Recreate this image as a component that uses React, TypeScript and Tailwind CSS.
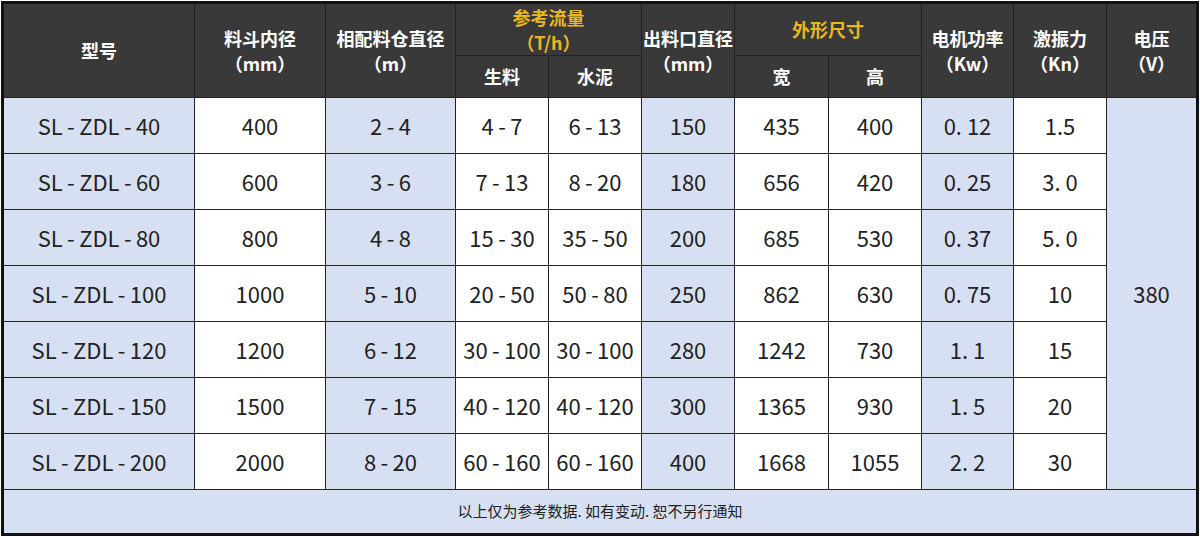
const rows = [
  ['SL-ZDL-40', '400', '2-4', '4-7', '6-13', '150', '435', '400', '0. 12', '1.5'],
  ['SL-ZDL-60', '600', '3-6', '7-13', '8-20', '180', '656', '420', '0. 25', '3. 0'],
  ['SL-ZDL-80', '800', '4-8', '15-30', '35-50', '200', '685', '530', '0. 37', '5. 0'],
  ['SL-ZDL-100', '1000', '5-10', '20-50', '50-80', '250', '862', '630', '0. 75', '10'],
  ['SL-ZDL-120', '1200', '6-12', '30-100', '30-100', '280', '1242', '730', '1. 1', '15'],
  ['SL-ZDL-150', '1500', '7-15', '40-120', '40-120', '300', '1365', '930', '1. 5', '20'],
  ['SL-ZDL-200', '2000', '8-20', '60-160', '60-160', '400', '1668', '1055', '2. 2', '30'],
];

// columns painted light blue in the body
const blueCols = [0, 2, 5, 8];

const widths = [192, 131, 130, 93, 93, 93, 94, 93, 92, 93, 91];

function fmt(v: string) {
  // the source font draws hyphens with space around them
  return v.replace(/-/g, '\u2009-\u2009');
}

export default function App() {
  const th = 'border border-[#222] bg-[#393939] text-white font-bold text-[18px] leading-[25px] text-center align-middle';
  return (
    <div className="w-[1200px] h-[538px] bg-white overflow-hidden" style={{ fontFamily: '"Noto Sans CJK SC", "Noto Sans", sans-serif' }}>
      <table className="table-fixed border-collapse w-[1198px] ml-px mt-px border-[3px] border-[#111]">
        <colgroup>
          {widths.map((w, i) => (
            <col key={i} style={{ width: w }} />
          ))}
        </colgroup>
        <thead>
          <tr className="h-[53px]">
            <th rowSpan={2} className={th}>型号</th>
            <th rowSpan={2} className={th}>料斗内径<br />（mm）</th>
            <th rowSpan={2} className={th}>相配料仓直径<br />（m）</th>
            <th colSpan={2} className={`${th} !text-[#eab81e]`}>参考流量<br />（T/h）</th>
            <th rowSpan={2} className={th}>出料口直径<br />（mm）</th>
            <th colSpan={2} className={`${th} !text-[#eab81e]`}>外形尺寸</th>
            <th rowSpan={2} className={th}>电机功率<br />（Kw）</th>
            <th rowSpan={2} className={th}>激振力<br />（Kn）</th>
            <th rowSpan={2} className={th}>电压<br />（V）</th>
          </tr>
          <tr className="h-[42px]">
            <th className={th}>生料</th>
            <th className={th}>水泥</th>
            <th className={th}>宽</th>
            <th className={th}>高</th>
          </tr>
        </thead>
        <tbody>
          {rows.map((r, ri) => (
            <tr key={ri} className="h-[56px]">
              {r.map((v, ci) => (
                <td
                  key={ci}
                  className={`border border-[#222] text-center align-middle text-[22px] text-[#222] ${blueCols.includes(ci) ? 'bg-[#d7e0f2]' : 'bg-white'}`}
                >
                  {fmt(v)}
                </td>
              ))}
              {ri === 0 && (
                <td rowSpan={7} className="border border-[#222] bg-[#d7e0f2] text-center align-middle text-[22px] text-[#222]">
                  380
                </td>
              )}
            </tr>
          ))}
          <tr className="h-[45px]">
            <td colSpan={11} className="border border-[#222] bg-[#d7e0f2] text-center align-middle text-[15px] text-[#222]">
              以上仅为参考数据. 如有变动. 恕不另行通知
            </td>
          </tr>
        </tbody>
      </table>
    </div>
  );
}
